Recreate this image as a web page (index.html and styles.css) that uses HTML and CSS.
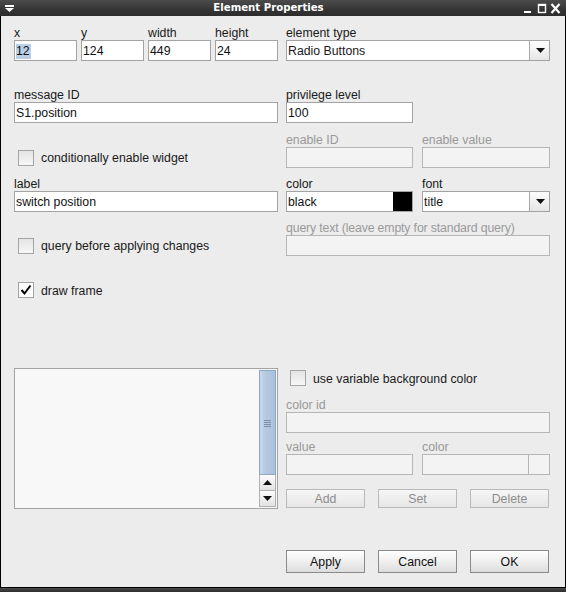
FILE: index.html
```html
<!DOCTYPE html>
<html>
<head>
<meta charset="utf-8">
<title>Element Properties</title>
<link rel="stylesheet" href="styles.css">
</head>
<body>
<div class="window">
  <div class="titlebar">
    <div class="tb-left">
      <svg width="9" height="7" viewBox="0 0 9 7"><rect x="0" y="0" width="9" height="2" fill="#fff"/><path d="M0 3 H9 L4.5 7 Z" fill="#fff"/></svg>
    </div>
    <div class="title">Element Properties</div>
    <div class="tb-controls">
      <svg width="42" height="11" viewBox="0 0 42 11">
        <rect x="4" y="8" width="7" height="2" fill="#fff"/>
        <rect x="18.5" y="1.5" width="7" height="8" fill="none" stroke="#fff" stroke-width="1.4"/>
        <rect x="18" y="1" width="8" height="2" fill="#fff"/>
        <path d="M31.5 1 L39.5 10 M39.5 1 L31.5 10" stroke="#fff" stroke-width="2.2"/>
      </svg>
    </div>
  </div>

  <div class="content">
    <div class="row r1">
      <div class="quad">
        <div class="field"><div class="lbl">x</div><div class="input"><span class="sel">12</span></div></div>
        <div class="field"><div class="lbl">y</div><div class="input">124</div></div>
        <div class="field"><div class="lbl">width</div><div class="input">449</div></div>
        <div class="field"><div class="lbl">height</div><div class="input">24</div></div>
      </div>
      <div class="field">
        <div class="lbl">element type</div>
        <div class="combo"><span class="cval">Radio Buttons</span><span class="carrow"><svg width="9" height="5" viewBox="0 0 9 5"><path d="M0 0 H9 L4.5 5 Z" fill="#111"/></svg></span></div>
      </div>
    </div>

    <div class="row r2">
      <div class="field"><div class="lbl">message ID</div><div class="input">S1.position</div></div>
      <div class="pair">
        <div class="field"><div class="lbl">privilege level</div><div class="input">100</div></div>
      </div>
    </div>

    <div class="row r3">
      <div class="check-cell"><span class="cb"></span><span class="cb-text">conditionally enable widget</span></div>
      <div class="pair">
        <div class="field"><div class="lbl dis">enable ID</div><div class="input dis"></div></div>
        <div class="field"><div class="lbl dis">enable value</div><div class="input dis"></div></div>
      </div>
    </div>

    <div class="row r4">
      <div class="field"><div class="lbl">label</div><div class="input">switch position</div></div>
      <div class="pair">
        <div class="field"><div class="lbl">color</div><div class="input colorfield"><span class="ctext">black</span><span class="swatch black"></span></div></div>
        <div class="field">
          <div class="lbl">font</div>
          <div class="combo"><span class="cval">title</span><span class="carrow"><svg width="9" height="5" viewBox="0 0 9 5"><path d="M0 0 H9 L4.5 5 Z" fill="#111"/></svg></span></div>
        </div>
      </div>
    </div>

    <div class="row r5">
      <div class="check-cell"><span class="cb"></span><span class="cb-text">query before applying changes</span></div>
      <div class="field"><div class="lbl dis tight">query text (leave empty for standard query)</div><div class="input dis"></div></div>
    </div>

    <div class="row r6">
      <div class="check-line"><span class="cb checked"><svg width="14" height="14" viewBox="0 0 14 14"><path d="M2.5 7 L5.5 10.5 L11.5 2.5" fill="none" stroke="#000" stroke-width="2"/></svg></span><span class="cb-text">draw frame</span></div>
    </div>

    <div class="row bottom">
      <div class="listbox">
        <div class="list-area"></div>
        <div class="scrollbar">
          <div class="thumb"><div class="grip"><i></i><i></i><i></i><i></i></div></div>
          <div class="sbtn"><svg width="9" height="5" viewBox="0 0 9 5"><path d="M0 5 H9 L4.5 0 Z" fill="#111"/></svg></div>
          <div class="sbtn"><svg width="9" height="5" viewBox="0 0 9 5"><path d="M0 0 H9 L4.5 5 Z" fill="#111"/></svg></div>
        </div>
      </div>
      <div class="bgpanel">
        <div class="check-line"><span class="cb"></span><span class="cb-text">use variable background color</span></div>
        <div class="field colorid"><div class="lbl dis">color id</div><div class="input dis"></div></div>
        <div class="pair valuepair">
          <div class="field"><div class="lbl dis">value</div><div class="input dis"></div></div>
          <div class="field"><div class="lbl dis">color</div><div class="input dis colorfield"><span class="ctext"></span><span class="swatch empty"></span></div></div>
        </div>
        <div class="btnrow small">
          <div class="btn dis">Add</div>
          <div class="btn dis">Set</div>
          <div class="btn dis">Delete</div>
        </div>
      </div>
    </div>

    <div class="row actions">
      <div></div>
      <div class="btnrow big">
        <div class="btn">Apply</div>
        <div class="btn">Cancel</div>
        <div class="btn">OK</div>
      </div>
    </div>
  </div>
  <div class="bottomframe"></div>
</div>
</body>
</html>
```

FILE: styles.css
```css
html, body {
  margin: 0;
  padding: 0;
  background: #000;
}
body {
  font-family: "Liberation Sans", Arial, sans-serif;
  font-size: 12.3px;
  color: #1a1a1a;
}
.window {
  width: 566px;
  height: 592px;
  display: flex;
  flex-direction: column;
  background: #000;
}
.titlebar {
  height: 16px;
  flex: none;
  display: flex;
  align-items: center;
  background: linear-gradient(#4c4c4c, #353535 60%, #2c2c2c);
  color: #fff;
}
.tb-left {
  width: 16px;
  display: flex;
  justify-content: center;
  padding-left: 1px;
}
.tb-left svg { display: block; }
.title {
  flex: 1;
  text-align: center;
  font-family: "DejaVu Sans Condensed", "DejaVu Sans", sans-serif;
  font-stretch: semi-condensed;
  font-weight: bold;
  font-size: 11.3px;
  line-height: 16px;
}
.tb-controls {
  width: 46px;
  display: flex;
  align-items: center;
}
.tb-controls svg { display: block; }

.content {
  flex: 1;
  margin: 0 1px;
  background: #ececec;
  padding: 9px 15px 0 13px;
  box-sizing: border-box;
}
.row {
  display: grid;
  grid-template-columns: 264px 264px;
  column-gap: 8px;
  align-items: end;
}
.r2 { margin-top: 26px; }
.r3 { margin-top: 9px; }
.r4 { margin-top: 8px; }
.r5 { margin-top: 8px; }
.r6 { margin-top: 26px; }
.bottom { margin-top: 70px; align-items: start; }
.actions { margin-top: 41px; }

.quad {
  display: grid;
  grid-template-columns: repeat(4, 63px);
  column-gap: 4px;
}
.pair {
  display: grid;
  grid-template-columns: 127px 128px;
  column-gap: 9px;
}
.field { display: flex; flex-direction: column; min-width: 0; }
.lbl {
  height: 15px;
  box-sizing: border-box;
  padding-top: 1px;
  line-height: 14px;
  white-space: nowrap;
  color: #1a1a1a;
}
.lbl.dis { color: #9a9a9a; }
.lbl.tight { letter-spacing: -0.15px; }

.input {
  height: 21px;
  box-sizing: border-box;
  border: 1px solid #a3a3a3;
  background: #fff;
  line-height: 19px;
  padding: 1px 1px 0;
  white-space: nowrap;
  overflow: hidden;
  color: #111;
}
.input.dis {
  background: #f3f3f3;
  border-color: #b6b6b6;
}
.sel {
  background: #b8cfe5;
  display: inline-block;
  line-height: 15px;
  padding-right: 1px;
}
.colorfield {
  display: flex;
  padding: 0;
}
.colorfield .ctext { flex: 1; padding: 1px 0 0 1px; }
.swatch {
  width: 20px;
  flex: none;
}
.swatch.black {
  background: #000;
  margin: -1px -1px -1px 0;
  height: 21px;
}
.swatch.empty {
  border-left: 1px solid #b6b6b6;
}

.combo {
  height: 21px;
  box-sizing: border-box;
  border: 1px solid #a3a3a3;
  background: #fff;
  display: flex;
}
.cval {
  flex: 1;
  line-height: 19px;
  padding: 1px 0 0 1px;
}
.carrow {
  width: 19px;
  border-left: 1px solid #a8a8a8;
  background: linear-gradient(#fdfdfd, #e6e6e6);
  display: flex;
  align-items: center;
  justify-content: center;
}
.carrow svg { display: block; margin-left: 1px; }

.check-cell {
  height: 21px;
  display: flex;
  align-items: center;
  padding-left: 4px;
}
.check-line {
  height: 16px;
  display: flex;
  align-items: center;
  padding-left: 4px;
}
.cb {
  width: 16px;
  height: 16px;
  box-sizing: border-box;
  border: 1px solid #a4a4a4;
  background: linear-gradient(#e3e3e3, #f7f7f7);
  flex: none;
  display: flex;
  align-items: center;
  justify-content: center;
}
.cb.checked { background: #fff; }
.cb svg { display: block; }
.cb-text {
  margin-left: 7px;
  white-space: nowrap;
  line-height: 14px;
  padding-top: 1px;
}

.listbox {
  height: 141px;
  box-sizing: border-box;
  border: 1px solid #a3a3a3;
  background: #f8f8f8;
  padding: 1px;
  display: flex;
}
.list-area { flex: 1; }
.scrollbar {
  width: 17px;
  display: flex;
  flex-direction: column;
}
.thumb {
  flex: 1;
  box-sizing: border-box;
  border: 1px solid #8fa5c2;
  background: linear-gradient(to right, #c9d9ec, #b3c8e0 40%, #aac1dc);
  display: flex;
  align-items: center;
  justify-content: center;
}
.grip {
  display: flex;
  flex-direction: column;
  gap: 1px;
  margin-top: 2px;
}
.grip i {
  display: block;
  width: 7px;
  height: 1px;
  background: #7d8ea8;
}
.sbtn {
  height: 16px;
  box-sizing: border-box;
  border: 1px solid #b0b0b0;
  border-top: none;
  background: linear-gradient(#fcfcfc, #e2e2e2);
  display: flex;
  align-items: center;
  justify-content: center;
}
.sbtn svg { display: block; }

.bgpanel {
  display: flex;
  flex-direction: column;
  padding-top: 2px;
}
.bgpanel .colorid { margin-top: 11px; }
.bgpanel .valuepair { margin-top: 6px; }
.btnrow {
  display: grid;
  grid-template-columns: repeat(3, 79px);
  column-gap: 13px;
}
.btnrow.small { margin-top: 14px; }
.btnrow.small .btn { height: 19px; line-height: 17px; padding-top: 1px; }
.btnrow.big .btn { height: 23px; line-height: 21px; padding-top: 1px; }
.btn {
  box-sizing: border-box;
  border: 1px solid #8a8a8a;
  background: linear-gradient(#ffffff, #f1f1f1 45%, #dcdcdc);
  text-align: center;
  color: #111;
}
.btn.dis {
  border-color: #b9b9b9;
  background: linear-gradient(#f6f6f6, #e6e6e6);
  color: #8d8d8d;
}

.bottomframe {
  height: 5px;
  flex: none;
  box-sizing: border-box;
  border-top: 1px solid #000;
  background: linear-gradient(#4a4a4a, #2c2c2c);
}
```
